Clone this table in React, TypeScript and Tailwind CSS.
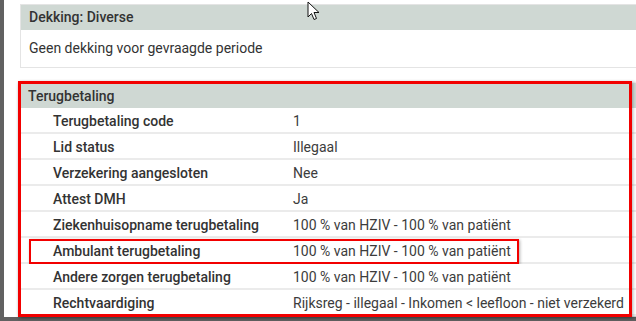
const ROWS = [
  { label: "Terugbetaling code", value: "1" },
  { label: "Lid status", value: "Illegaal" },
  { label: "Verzekering aangesloten", value: "Nee" },
  { label: "Attest DMH", value: "Ja" },
  { label: "Ziekenhuisopname terugbetaling", value: "100 % van HZIV - 100 % van patiënt" },
  { label: "Ambulant terugbetaling", value: "100 % van HZIV - 100 % van patiënt", marked: true },
  { label: "Andere zorgen terugbetaling", value: "100 % van HZIV - 100 % van patiënt" },
  { label: "Rechtvaardiging", value: "Rijksreg - illegaal - Inkomen < leefloon - niet verzekerd" },
];

function Pointer() {
  return (
    <svg className="absolute left-[307px] top-[1px]" width="14" height="21" viewBox="0 0 14 21">
      <path
        d="M1 1 L1 16 L4.5 12.5 L7 18.5 L9.5 17.5 L7 11.5 L12 11.5 Z"
        fill="#fff"
        stroke="#111"
        strokeWidth="1"
        strokeLinejoin="round"
      />
    </svg>
  );
}

export default function App() {
  return (
    <div
      className="relative flex h-[321px] w-[636px] overflow-hidden bg-[#616161] text-[14px] text-[#333]"
      style={{ fontFamily: "Roboto, 'Liberation Sans', sans-serif" }}
    >
      <div className="w-[4px] shrink-0" />
      <div className="flex h-[317px] flex-1 flex-col bg-white pl-[16px] pt-[4px]">
        {/* Dekking */}
        <div className="w-[622px] shrink-0 border border-[#e4e4e4]">
          <div className="flex h-[25px] items-center bg-[#cfd8d3] px-[8px] font-medium">Dekking: Diverse</div>
          <div className="flex h-[37px] items-center px-[8px]">Geen dekking voor gevraagde periode</div>
        </div>

        {/* Terugbetaling */}
        <div className="relative mt-[15px] w-[622px] shrink-0">
          <div className="shadow-[0_1px_4px_rgba(0,0,0,0.35)]">
            <div className="flex h-[25px] items-center bg-[#cfd8d3] px-[8px] pt-[1px] font-medium">Terugbetaling</div>
            {ROWS.map((row) => (
              <div
                key={row.label}
                className="relative flex h-[26px] items-center border-b-2 border-[#ebebeb] bg-white pl-[33px] pt-[2px]"
              >
                <div className="w-[240px] shrink-0 font-medium">{row.label}</div>
                <div className="whitespace-nowrap text-[#3c3c3c]">{row.value}</div>
                {row.marked && (
                  <div className="pointer-events-none absolute left-[9px] top-[1px] h-[25px] w-[490px] border-2 border-[#f20000] shadow-[1px_1px_3px_rgba(0,0,0,0.3)]" />
                )}
              </div>
            ))}
          </div>
          <div className="pointer-events-none absolute left-[-2px] top-[-2px] h-[236px] w-[614px] border-[3px] border-[#f20000] shadow-[1px_1px_3px_rgba(0,0,0,0.3)]" />
        </div>
      </div>
      <Pointer />
    </div>
  );
}
